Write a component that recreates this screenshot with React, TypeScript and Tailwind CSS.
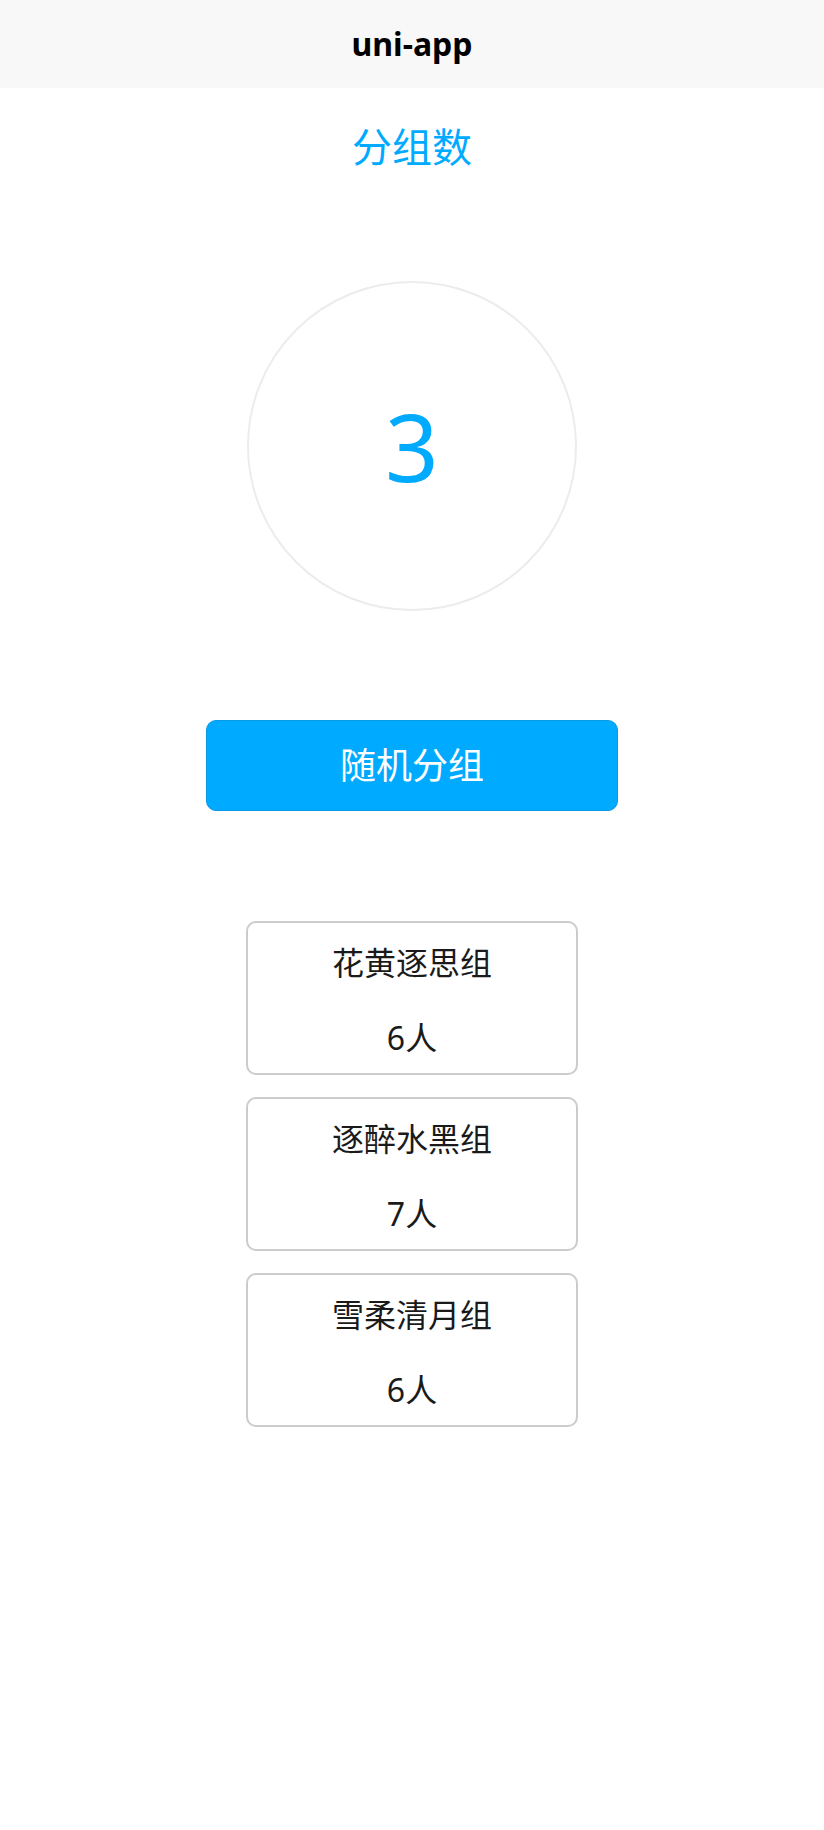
import { useState } from 'react'

interface Group {
  name: string
  count: number
}

const groups: Group[] = [
  { name: '花黄逐思组', count: 6 },
  { name: '逐醉水黑组', count: 7 },
  { name: '雪柔清月组', count: 6 },
]

const font = { fontFamily: '"Noto Sans", "Noto Sans CJK SC", sans-serif' }

export default function App() {
  const [total] = useState(3)

  return (
    <div className="min-h-screen bg-white" style={font}>
      {/* nav bar */}
      <div className="h-[88px] bg-[#f8f8f8] flex items-center justify-center">
        <span className="text-[32px] font-bold text-black leading-none">uni-app</span>
      </div>

      <div className="flex flex-col items-center">
        <h1 className="mt-[31px] h-[56px] leading-[56px] text-[40px] text-[#00aaff]">分组数</h1>

        <div className="mt-[106px] w-[330px] h-[330px] rounded-full border-2 border-[#ececec] flex items-center justify-center">
          <span className="text-[94px] leading-none text-[#00aaff]">{total}</span>
        </div>

        <button className="mt-[109px] w-[412px] h-[91px] rounded-[10px] bg-[#00aaff] border border-[#0a9ae6] text-white text-[36px]">
          随机分组
        </button>

        <div className="mt-[110px] flex flex-col gap-[22px]">
          {groups.map((g) => (
            <div
              key={g.name}
              className="w-[332px] h-[154px] rounded-[10px] border-2 border-[#cccccc] flex flex-col items-center pt-[15px] text-[#1a1a1a] text-[32px]"
            >
              <span className="leading-[50px]">{g.name}</span>
              <span className="mt-[25px] leading-[50px]">{g.count}人</span>
            </div>
          ))}
        </div>
      </div>
    </div>
  )
}
